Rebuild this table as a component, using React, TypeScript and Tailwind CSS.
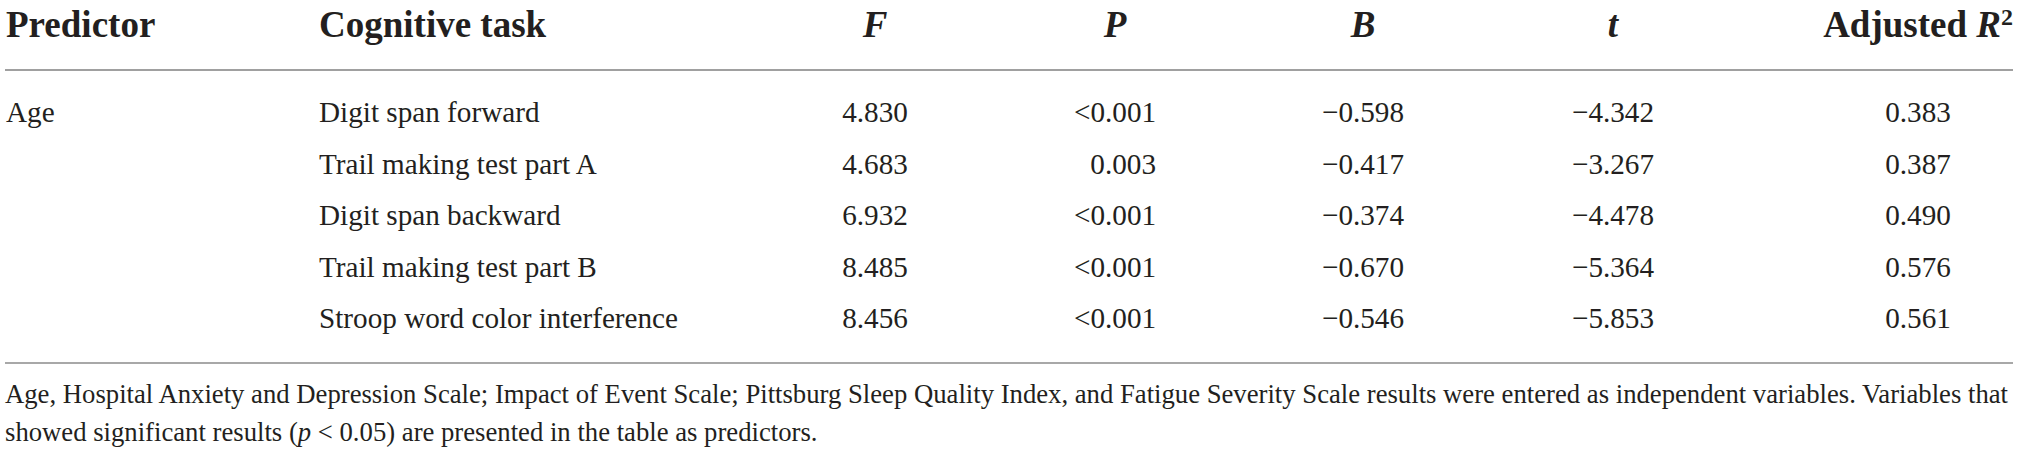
const rows = [
  { pred: 'Age', task: 'Digit span forward', f: '4.830', p: '<0.001', b: '\u22120.598', t: '\u22124.342', r2: '0.383' },
  { pred: '', task: 'Trail making test part A', f: '4.683', p: '0.003', b: '\u22120.417', t: '\u22123.267', r2: '0.387' },
  { pred: '', task: 'Digit span backward', f: '6.932', p: '<0.001', b: '\u22120.374', t: '\u22124.478', r2: '0.490' },
  { pred: '', task: 'Trail making test part B', f: '8.485', p: '<0.001', b: '\u22120.670', t: '\u22125.364', r2: '0.576' },
  { pred: '', task: 'Stroop word color interference', f: '8.456', p: '<0.001', b: '\u22120.546', t: '\u22125.853', r2: '0.561' },
];

const grid = 'grid grid-cols-[314px_436px_240px_240px_256px_244px_1fr]';

export default function App() {
  return (
    <div className="min-h-[452px] w-[2019px] bg-white pl-[5px] pr-[6px] text-[#231f20] [font-family:'Liberation_Serif',serif]">
      <div className={`${grid} h-[69px] pt-[5px] text-[37px] leading-[40px] font-bold`}>
        <div className="pl-[1px]">Predictor</div>
        <div>Cognitive task</div>
        <div className="text-center italic">F</div>
        <div className="text-center italic">P</div>
        <div className="text-center italic">B</div>
        <div className="text-center italic">t</div>
        <div className="text-right">
          Adjusted <span className="italic">R</span>
          <sup className="text-[24px]">2</sup>
        </div>
      </div>
      <div className="border-t-2 border-[#a0a0a0] pt-[16px] pb-[17.5px] text-[29.2px] leading-[51.5px]">
        {rows.map((r) => (
          <div key={r.task} className={grid}>
            <div className="pl-[1px]">{r.pred}</div>
            <div>{r.task}</div>
            <div className="text-center">{r.f}</div>
            <div className="mx-auto w-[82px] text-right">{r.p}</div>
            <div className="text-center">{r.b}</div>
            <div className="text-center">{r.t}</div>
            <div className="ml-auto w-[190px] text-center">{r.r2}</div>
          </div>
        ))}
      </div>
      <div className="border-t-2 border-[#a8a8a8] pt-[11px] text-[26.7px] leading-[38px]">
        <p className="whitespace-nowrap">
          Age, Hospital Anxiety and Depression Scale; Impact of Event Scale; Pittsburg Sleep Quality Index, and Fatigue
          Severity Scale results were entered as independent variables. Variables that
        </p>
        <p>
          showed significant results (<span className="italic">p</span> &lt; 0.05) are presented in the table as
          predictors.
        </p>
      </div>
    </div>
  );
}
